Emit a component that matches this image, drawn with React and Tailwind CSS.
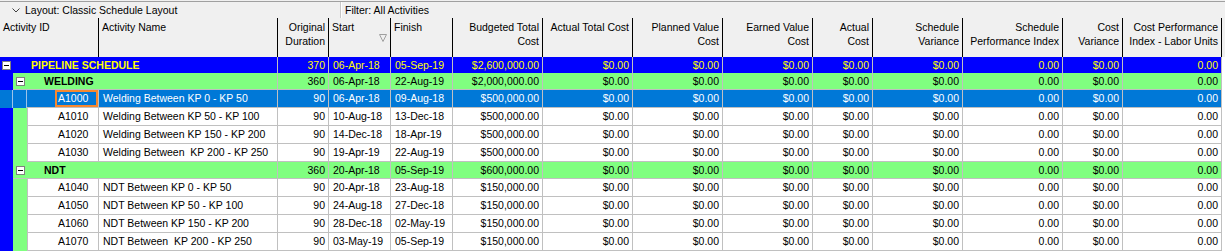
import React from 'react'

// column widths (px) – ID, Name, Duration, Start, Finish, then the cost columns
const cols = [
  { key: 'id', w: 'w-[99px]', label: ['Activity ID'], align: 'left' },
  { key: 'name', w: 'w-[179px]', label: ['Activity Name'], align: 'left' },
  { key: 'dur', w: 'w-[51px]', label: ['Original', 'Duration'], align: 'right' },
  { key: 'start', w: 'w-[62px]', label: ['Start'], align: 'left', sort: true },
  { key: 'finish', w: 'w-[62px]', label: ['Finish'], align: 'left' },
  { key: 'btc', w: 'w-[90px]', label: ['Budgeted Total', 'Cost'], align: 'right' },
  { key: 'atc', w: 'w-[90px]', label: ['Actual Total Cost'], align: 'right' },
  { key: 'pv', w: 'w-[90px]', label: ['Planned Value', 'Cost'], align: 'right' },
  { key: 'ev', w: 'w-[90px]', label: ['Earned Value', 'Cost'], align: 'right' },
  { key: 'ac', w: 'w-[60px]', label: ['Actual', 'Cost'], align: 'right' },
  { key: 'sv', w: 'w-[90px]', label: ['Schedule', 'Variance'], align: 'right' },
  { key: 'spi', w: 'w-[100px]', label: ['Schedule', 'Performance Index'], align: 'right' },
  { key: 'cv', w: 'w-[60px]', label: ['Cost', 'Variance'], align: 'right' },
  { key: 'cpi', w: 'w-[99px]', label: ['Cost Performance', 'Index - Labor Units'], align: 'right' },
]

const zeros = ['$0.00', '$0.00', '$0.00', '$0.00', '$0.00', '0.00', '$0.00', '0.00']

const rows = [
  { type: 'wbs0', name: 'PIPELINE SCHEDULE', vals: ['370', '06-Apr-18', '05-Sep-19', '$2,600,000.00', ...zeros] },
  { type: 'wbs1', name: 'WELDING', vals: ['360', '06-Apr-18', '22-Aug-19', '$2,000,000.00', ...zeros] },
  { type: 'act', sel: true, id: 'A1000', name: 'Welding Between KP 0 - KP 50', vals: ['90', '06-Apr-18', '09-Aug-18', '$500,000.00', ...zeros] },
  { type: 'act', id: 'A1010', name: 'Welding Between KP 50 - KP 100', vals: ['90', '10-Aug-18', '13-Dec-18', '$500,000.00', ...zeros] },
  { type: 'act', id: 'A1020', name: 'Welding Between KP 150 - KP 200', vals: ['90', '14-Dec-18', '18-Apr-19', '$500,000.00', ...zeros] },
  { type: 'act', id: 'A1030', name: 'Welding Between  KP 200 - KP 250', vals: ['90', '19-Apr-19', '22-Aug-19', '$500,000.00', ...zeros] },
  { type: 'wbs1', name: 'NDT', vals: ['360', '20-Apr-18', '05-Sep-19', '$600,000.00', ...zeros] },
  { type: 'act', id: 'A1040', name: 'NDT Between KP 0 - KP 50', vals: ['90', '20-Apr-18', '23-Aug-18', '$150,000.00', ...zeros] },
  { type: 'act', id: 'A1050', name: 'NDT Between KP 50 - KP 100', vals: ['90', '24-Aug-18', '27-Dec-18', '$150,000.00', ...zeros] },
  { type: 'act', id: 'A1060', name: 'NDT Between KP 150 - KP 200', vals: ['90', '28-Dec-18', '02-May-19', '$150,000.00', ...zeros] },
  { type: 'act', id: 'A1070', name: 'NDT Between  KP 200 - KP 250', vals: ['90', '03-May-19', '05-Sep-19', '$150,000.00', ...zeros] },
]

function MinusBox() {
  return (
    <div className="w-[9px] h-[9px] bg-white border border-[#808080] flex items-center justify-center shrink-0">
      <div className="w-[5px] h-px bg-black" />
    </div>
  )
}

function HeaderRow() {
  return (
    <div className="flex h-[39px] bg-[#f0f0f0]">
      {cols.map((c) => (
        <div
          key={c.key}
          className={`${c.w} shrink-0 relative border-r border-black px-[3px] pt-[2px] leading-[14px] ${
            c.align === 'right' ? 'text-right' : 'text-left'
          }`}
        >
          {c.label.map((l) => (
            <div key={l} className="whitespace-nowrap">{l}</div>
          ))}
          {c.sort && (
            <svg className="absolute right-[3px] top-[16px]" width="8" height="8" viewBox="0 0 8 8">
              <polygon points="0.5,0.5 7.5,0.5 4,7.5" fill="none" stroke="#a0a0a0" strokeWidth="1" />
            </svg>
          )}
        </div>
      ))}
      <div className="flex-1" />
    </div>
  )
}

function ValueCells({ vals, text, line }) {
  return vals.map((v, i) => {
    const c = cols[i + 2]
    return (
      <div
        key={c.key}
        className={`${c.w} shrink-0 flex items-center border-r ${line} px-[3px] ${text} ${
          c.align === 'right' ? 'justify-end' : 'justify-start pl-[4px]'
        }`}
      >
        {v}
      </div>
    )
  })
}

function Row({ r }) {
  if (r.type === 'wbs0') {
    return (
      <div className="flex h-[16px] bg-[#0000ff]">
        <div className="w-[278px] shrink-0 flex items-center border-r border-[#c0c0c0]">
          <div className="pl-[2px] w-[31px] shrink-0">
            <MinusBox />
          </div>
          <span className="font-bold text-[#ffff00]">{r.name}</span>
        </div>
        <ValueCells vals={r.vals} text="text-[#ffff00]" line="border-[#c0c0c0]" />
      </div>
    )
  }

  if (r.type === 'wbs1') {
    return (
      <div className="flex h-[17px]">
        <div className="w-[13px] shrink-0 bg-[#0000ff]" />
        <div className="flex flex-1 bg-[#80ff80] border-b border-[#c0c0c0]">
          <div className="w-[265px] shrink-0 flex items-center border-r border-[#c0c0c0]">
            <div className="pl-[3px] w-[31px] shrink-0">
              <MinusBox />
            </div>
            <span className="font-bold text-black">{r.name}</span>
          </div>
          <ValueCells vals={r.vals} text="text-black" line="border-[#c0c0c0]" />
        </div>
      </div>
    )
  }

  if (r.sel) {
    return (
      <div className="flex h-[18px] bg-[#0078d7] text-white">
        <div className="w-[13px] shrink-0 border-r border-[#9cc3e8]" />
        <div className="w-[14px] shrink-0 border-r border-[#9cc3e8]" />
        <div className="w-[72px] shrink-0 flex items-stretch justify-end border-r border-b border-[#c0c0c0] py-0">
          <div className="w-[43px] border-2 border-[#f7882f] flex items-center pl-[1px]">{r.id}</div>
        </div>
        <div className="w-[179px] shrink-0 flex items-center border-r border-b border-[#c0c0c0] px-[4px] whitespace-pre">
          {r.name}
        </div>
        <div className="flex flex-1 border-b border-[#c0c0c0]">
          <ValueCells vals={r.vals} text="text-white" line="border-[#c0c0c0]" />
        </div>
      </div>
    )
  }

  return (
    <div className="flex h-[18px]">
      <div className="w-[13px] shrink-0 bg-[#0000ff]" />
      <div className="w-[14px] shrink-0 bg-[#80ff80]" />
      <div className="flex flex-1 bg-white border-b border-l border-[#c0c0c0] text-black">
        <div className="w-[71px] shrink-0 flex items-center border-r border-[#c0c0c0] pl-[30px]">{r.id}</div>
        <div className="w-[179px] shrink-0 flex items-center border-r border-[#c0c0c0] px-[4px] whitespace-pre">
          {r.name}
        </div>
        <ValueCells vals={r.vals} text="text-black" line="border-[#c0c0c0]" />
      </div>
    </div>
  )
}

export default function App() {
  return (
    <div className="w-[1225px] h-[251px] overflow-hidden bg-white text-[10.5px] text-black font-['Liberation_Sans',Arial,sans-serif]">
      {/* layout / filter bar */}
      <div className="h-px bg-[#f0f0f0]" />
      <div className="flex h-[17px] bg-[#f0f0f0] border-t border-[#a0a0a0] leading-none">
        <div className="w-[341px] shrink-0 flex items-center pl-[12px] gap-[5px] border-r border-[#c8c8c8]">
          <svg width="8" height="5" viewBox="0 0 8 5">
            <polyline points="0.5,0.5 4,4 7.5,0.5" fill="none" stroke="#404040" strokeWidth="1" />
          </svg>
          <span>Layout: Classic Schedule Layout</span>
        </div>
        <div className="flex-1 flex items-center pl-[3px] border-l border-white">
          <span>Filter: All Activities</span>
        </div>
      </div>

      <HeaderRow />

      <div className="w-[1222px] leading-none">
        {rows.map((r, i) => (
          <Row key={i} r={r} />
        ))}
      </div>
    </div>
  )
}
